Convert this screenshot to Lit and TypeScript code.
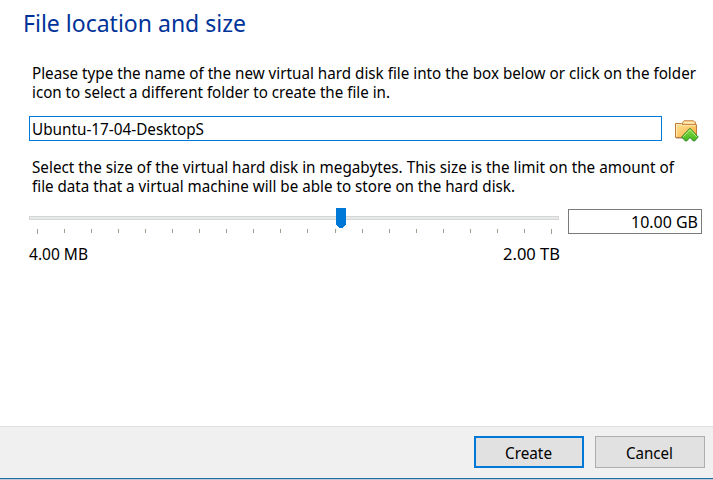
import { LitElement, html, css, svg } from "lit";
import { customElement, property, query } from "lit/decorators.js";

/** A single line of text condensed horizontally to the given width. */
@customElement("fit-text")
class FitText extends LitElement {
  @property({ type: Number }) width = 100;
  @query("span") private line!: HTMLSpanElement;

  static styles = css`
    :host { display: block; white-space: nowrap; overflow: visible; }
    span { display: inline-block; transform-origin: 0 50%; }
  `;

  firstUpdated() {
    this.style.width = `${this.width}px`;
    const natural = this.line.getBoundingClientRect().width;
    if (natural) this.line.style.transform = `scaleX(${this.width / natural})`;
  }

  render() {
    return html`<span><slot></slot></span>`;
  }
}

const TICKS = 20;

@customElement("app-root")
class AppRoot extends LitElement {
  static styles = css`
    :host {
      display: flex;
      flex-direction: column;
      box-sizing: border-box;
      width: 713px;
      height: 480px;
      background: #fff;
      color: #000;
      font: 16px/19px "Noto Sans", "Open Sans", sans-serif;
      overflow: hidden;
    }
    * { box-sizing: border-box; }
    main { flex: 1; padding: 7px 11px 0 29px; }
    h1 {
      margin: 0 0 0 -6px;
      font-weight: 400;
      font-size: 24px;
      line-height: 32px;
      color: #003399;
    }
    p { margin: 0; padding-left: 3px; }
    .intro { margin-top: 25px; }
    .file { display: flex; align-items: flex-start; height: 25px; margin-top: 14px; }
    .field {
      display: flex;
      align-items: center;
      height: 25px;
      padding-top: 2px;
      border: 1px solid #0078d7;
      background: #fff;
    }
    .name { width: 633px; padding-left: 2px; }
    .file svg { flex: none; margin: 4px 0 0 12px; }
    .explain { margin-top: 17px; }
    .size { display: flex; margin-top: 13px; }
    .slider { position: relative; width: 530px; height: 27px; padding-top: 7px; }
    .track { height: 4px; border: 1px solid #d6d6d6; background: #e7eaea; }
    .ticks { display: flex; justify-content: space-between; margin: 9px 7px 0 8px; }
    .ticks i { width: 1px; height: 4px; background: #a09f90; }
    .ticks i:first-child, .ticks i:last-child { height: 5px; }
    .thumb { position: absolute; left: 307px; top: -1px; display: block; }
    .amount {
      width: 134px;
      margin-left: 9px;
      border-color: #7a7a7a;
      justify-content: flex-end;
      padding-right: 3px;
    }
    .range { display: flex; justify-content: space-between; width: 531px; margin-top: 9px; }
    footer {
      display: flex;
      justify-content: flex-end;
      gap: 11px;
      height: 54px;
      padding: 9px 8px 0 0;
      border-top: 1px solid #dfdfdf;
      border-bottom: 1px solid #c4c8cc;
      background: #f0f0f0;
      box-shadow: inset 0 -1px #1a6cab;
    }
    button {
      display: flex;
      align-items: center;
      justify-content: center;
      width: 110px;
      height: 32px;
      padding: 2px 1px 0 0;
      border: 1px solid #adadad;
      background: #e1e1e1;
      color: #000;
      font: inherit;
    }
    .default { border: 2px solid #0078d7; padding-right: 2px; }
  `;

  private folder() {
    return svg`<svg width="25" height="23" viewBox="0 0 25 23">
      <defs>
        <linearGradient id="f" x1="0" y1="0" x2="1" y2="1">
          <stop offset="0" stop-color="#ffe39a"/><stop offset="1" stop-color="#f9ac3a"/>
        </linearGradient>
        <linearGradient id="g" x1="0" y1="0" x2="0" y2="1">
          <stop offset="0" stop-color="#8ee04a"/><stop offset="1" stop-color="#3fb51e"/>
        </linearGradient>
      </defs>
      <path d="M2 18.500h10" stroke="#c9c5c0"/>
      <path d="M8.500 5V2.500L10 .700h9.500l1 1.300h1V6H8.500z" fill="#fbd68a" stroke="#c98d55"/>
      <path d="M10.500 2.700h9.500" stroke="#fff0c4"/>
      <path d="M1.500 3.500H7.500l1.500 1.200H22.500V17.500H1.500z" fill="url(#f)" stroke="#c07a3e"/>
      <path d="M2.500 16.500V4.500h4.600L8.600 5.700h13" fill="none" stroke="#fff0bd" stroke-opacity=".85"/>
      <path d="M16 8.200 24.200 16.900 20.600 21 19.400 21 16 17.400 12.600 21 11.400 21 7.600 17z" fill="url(#g)" stroke="#37852a"/>
      <path d="M9.200 16.900 16 9.700 22.700 16.900" fill="none" stroke="#b9f086" stroke-width=".9"/>
    </svg>`;
  }

  render() {
    return html`
      <main>
        <h1><fit-text width="223">File location and size</fit-text></h1>
        <p class="intro">
          <fit-text width="664">Please type the name of the new virtual hard disk file into the box below or click on the folder</fit-text>
          <fit-text width="358">icon to select a different folder to create the file in.</fit-text>
        </p>
        <div class="file">
          <div class="field name"><fit-text width="172">Ubuntu-17-04-DesktopS</fit-text></div>
          ${this.folder()}
        </div>
        <p class="explain">
          <fit-text width="642">Select the size of the virtual hard disk in megabytes. This size is the limit on the amount of</fit-text>
          <fit-text width="483">file data that a virtual machine will be able to store on the hard disk.</fit-text>
        </p>
        <div class="size">
          <div class="slider">
            <div class="track"></div>
            <div class="ticks">${Array.from({ length: TICKS }, () => html`<i></i>`)}</div>
            <svg class="thumb" width="10" height="20" viewBox="0 0 10 20">
              <path d="M0 0h10v17h-1v1h-1v1h-1v1H3v-1H2v-1H1v-1H0z" fill="#0078d7" shape-rendering="crispEdges"/>
            </svg>
          </div>
          <div class="field amount"><fit-text width="67">10.00 GB</fit-text></div>
        </div>
        <div class="range">
          <fit-text width="59">4.00 MB</fit-text>
          <fit-text width="57">2.00 TB</fit-text>
        </div>
      </main>
      <footer>
        <button class="default"><fit-text width="47">Create</fit-text></button>
        <button><fit-text width="47">Cancel</fit-text></button>
      </footer>
    `;
  }
}
